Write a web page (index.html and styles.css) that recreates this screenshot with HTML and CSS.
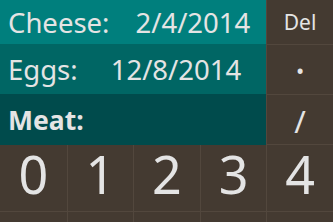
FILE: index.html
```html
<!DOCTYPE html>
<html lang="en">
<head>
  <meta charset="UTF-8" />
  <meta name="viewport" content="width=device-width, initial-scale=1.0" />
  <title>Expiry Dates</title>
  <link rel="stylesheet" href="styles.css">
</head>
<body>

  <div class="top">
    <ul class="items">
      <li class="item item-1">Cheese:<span class="date date-1">2/4/2014</span></li>
      <li class="item item-2">Eggs:<span class="date date-2">12/8/2014</span></li>
      <li class="item item-3 active">Meat:</li>
    </ul>

    <div class="side-keys">
      <button class="key small">Del</button>
      <button class="key small key-dot">·</button>
      <button class="key small key-slash">/</button>
    </div>
  </div>

  <div class="keypad">
    <button class="key digit">0</button>
    <button class="key digit">1</button>
    <button class="key digit">2</button>
    <button class="key digit">3</button>
    <button class="key digit">4</button>
    <button class="key digit"></button>
    <button class="key digit"></button>
    <button class="key digit"></button>
    <button class="key digit"></button>
    <button class="key digit"></button>
  </div>

</body>
</html>
```

FILE: styles.css
```css
body {
  margin: 0;
  width: 333px;
  height: 222px;
  overflow: hidden;
  background: #443a31;
  color: #e4e4e4;
  font-family: 'Noto Sans', 'Open Sans', sans-serif;
}

.top {
  display: flex;
  height: 145px;
}

.items {
  list-style: none;
  margin: 0;
  padding: 0;
  width: 266px;
}

.item {
  display: flex;
  align-items: center;
  padding-left: 8px;
  font-size: 27.5px;
}

.item-1 {
  height: 44px;
  background: #007f7d;
}

.item-2 {
  height: 50px;
  background: #006664;
}

.item-3 {
  height: 51px;
  background: #004b4c;
}

.date-1 {
  margin-left: 26px;
}

.date-2 {
  margin-left: 33px;
}

.active {
  font-weight: bold;
  font-size: 26.5px;
}

.side-keys {
  width: 67px;
  display: flex;
  flex-direction: column;
}

.key {
  background: #443a31;
  color: #e4e4e4;
  border: none;
  font-family: inherit;
  padding: 0;
  cursor: pointer;
}

.key.small {
  font-size: 21px;
  height: 50px;
  line-height: 1;
  border-bottom: 1px solid #52473d;
  border-left: 1px solid #52473d;
}

.key.small:first-child {
  height: 45px;
}

.key.key-dot {
  font-size: 40px;
}

.key.key-slash {
  font-size: 31px;
  padding-top: 4px;
}

.keypad {
  display: grid;
  grid-template-columns: repeat(5, 1fr);
}

.key.digit {
  height: 67px;
  font-size: 52px;
  line-height: 1;
  padding-bottom: 8px;
  border-bottom: 1px solid #52473d;
  border-left: 1px solid #52473d;
}

.key.digit:nth-child(5n+1) {
  border-left: none;
}
```
